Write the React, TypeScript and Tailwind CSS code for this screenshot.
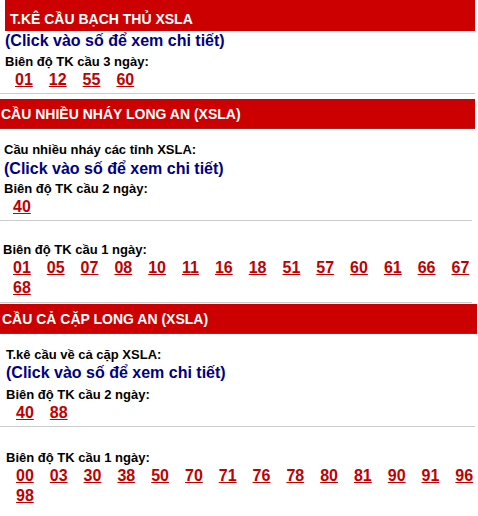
import type { ReactNode } from "react";

const BACH_THU = ["01", "12", "55", "60"];
const NHIEU_NHAY_2 = ["40"];
const NHIEU_NHAY_1 = ["01", "05", "07", "08", "10", "11", "16", "18", "51", "57", "60", "61", "66", "67", "68"];
const CA_CAP_2 = ["40", "88"];
const CA_CAP_1 = ["00", "03", "30", "38", "50", "70", "71", "76", "78", "80", "81", "90", "91", "96", "98"];

function NumRow({ nums, className = "" }: { nums: string[]; className?: string }) {
  return (
    <div className={`flex flex-wrap gap-x-[16px] ${className}`}>
      {nums.map((n, i) => (
        <a
          key={n + i}
          href="#"
          className="text-[16px] leading-[20px] font-bold text-[#bf0000] underline"
        >
          {n}
        </a>
      ))}
    </div>
  );
}

function Header({ children, className = "" }: { children: ReactNode; className?: string }) {
  return (
    <h2
      className={`bg-[#cc0000] border-b border-[#9a2a2a] text-[14px] leading-[16px] font-bold text-white whitespace-nowrap ${className}`}
    >
      {children}
    </h2>
  );
}

const Rule = ({ className = "" }: { className?: string }) => (
  <div className={`h-px bg-[#cccccc] ${className}`} />
);

export default function App() {
  return (
    <div className="w-[478px] h-[516px] overflow-hidden bg-white text-black font-['Liberation_Sans',Arial,sans-serif]">
      {/* Bạch thủ */}
      <section>
        <Header className="ml-[5px] mr-[3px] h-[31px] pl-[5px] pt-[11px] border-b-0">T.KÊ CẦU BẠCH THỦ XSLA</Header>
        <div className="pl-[5px]">
          <p className="mt-[1px] text-[16px] leading-[18px] font-bold text-[#000080]">(Click vào số để xem chi tiết)</p>
          <p className="mt-[3.5px] text-[13px] leading-[16px] font-bold">Biên độ TK cầu 3 ngày:</p>
          <NumRow nums={BACH_THU} className="pl-[10px]" />
        </div>
        <Rule className="mt-[3.5px] mr-[3px]" />
      </section>

      {/* Nhiều nháy */}
      <section className="mt-[5px]">
        <Header className="mr-[3px] h-[30px] pl-px pt-[7px]">CẦU NHIỀU NHÁY LONG AN (XSLA)</Header>
        <div className="pl-[4px]">
          <p className="mt-[12.5px] text-[13px] leading-[16px] font-bold">Cầu nhiều nháy các tỉnh XSLA:</p>
          <p className="mt-[2px] text-[16px] leading-[18px] font-bold text-[#000080]">(Click vào số để xem chi tiết)</p>
          <p className="mt-[3px] text-[13px] leading-[16px] font-bold">Biên độ TK cầu 2 ngày:</p>
          <NumRow nums={NHIEU_NHAY_2} className="pl-[9px]" />
        </div>
        <Rule className="mt-[3px] mr-[6px]" />
        <div className="pl-[3px]">
          <p className="mt-[21.5px] text-[13px] leading-[16px] font-bold">Biên độ TK cầu 1 ngày:</p>
          <NumRow nums={NHIEU_NHAY_1} className="pl-[10px]" />
        </div>
        <Rule className="mt-[4px] mr-[6px]" />
      </section>

      {/* Cả cặp */}
      <section className="mt-[1px]">
        <Header className="mr-px h-[30px] pl-[2px] pt-[7px]">CẦU CẢ CẶP LONG AN (XSLA)</Header>
        <div className="pl-[6px]">
          <p className="mt-[13px] text-[13px] leading-[16px] font-bold">T.kê cầu về cả cặp XSLA:</p>
          <p className="mt-[1px] text-[16px] leading-[18px] font-bold text-[#000080]">(Click vào số để xem chi tiết)</p>
          <p className="mt-[5px] text-[13px] leading-[16px] font-bold">Biên độ TK cầu 2 ngày:</p>
          <NumRow nums={CA_CAP_2} className="pl-[10px]" />
        </div>
        <Rule className="mt-[3px] mr-[3px]" />
        <div className="pl-[6px]">
          <p className="mt-[22.5px] text-[13px] leading-[16px] font-bold">Biên độ TK cầu 1 ngày:</p>
          <NumRow nums={CA_CAP_1} className="pl-[10px]" />
        </div>
      </section>
    </div>
  );
}
